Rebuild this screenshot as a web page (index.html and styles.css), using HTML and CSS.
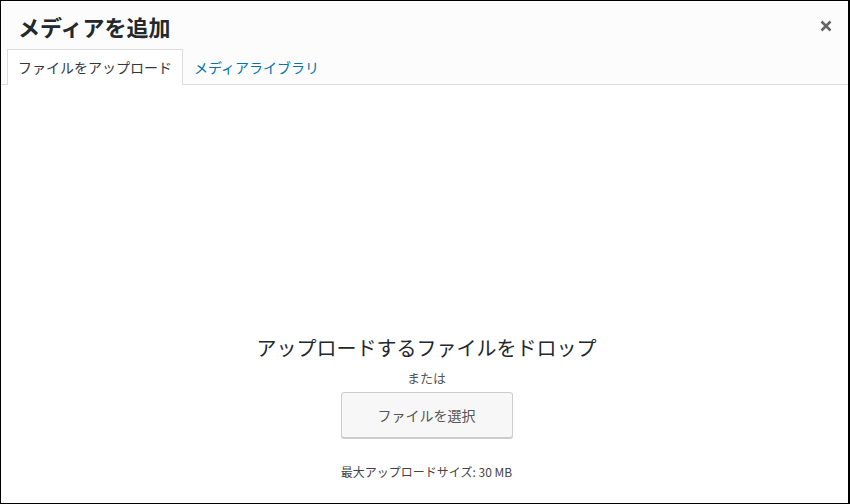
FILE: index.html
```html
<!DOCTYPE html>
<html lang="ja">
<head>
    <title>メディアを追加</title>
    <meta charset="utf-8">
    <link rel="stylesheet" href="styles.css">
</head>
<body>
    <div class="modal">
        <div class="modal-head">
            <div class="title-row">
                <h1>メディアを追加</h1>
                <button type="button" class="close" aria-label="閉じる">
                    <svg width="12" height="12" viewBox="0 0 12 12">
                        <path d="M1.5 1.5 L10.5 10.5 M10.5 1.5 L1.5 10.5" stroke="#666" stroke-width="2.6" fill="none"/>
                    </svg>
                </button>
            </div>
            <nav class="tabs">
                <a class="tab active" href="#">ファイルをアップロード</a>
                <a class="tab" href="#">メディアライブラリ</a>
            </nav>
        </div>
        <div class="uploader">
            <p class="drop-title">アップロードするファイルをドロップ</p>
            <p class="or">または</p>
            <button type="button" class="select-btn">ファイルを選択</button>
            <p class="max-size">最大アップロードサイズ: 30 MB</p>
        </div>
    </div>
</body>
</html>
```

FILE: styles.css
```css
html, body {
    margin: 0;
    padding: 0;
}
body {
    font-family: "Noto Sans CJK JP", "Noto Sans", sans-serif;
    color: #444;
    background: #fff;
}
.modal {
    height: 504px;
    box-sizing: border-box;
    border-style: solid;
    border-color: #000;
    border-width: 1px 2px 1px 1px;
    display: flex;
    flex-direction: column;
}
.modal-head {
    background: #fcfcfc;
    border-bottom: 1px solid #ddd;
    padding: 9px 16px 0 6px;
}
.title-row {
    display: flex;
    justify-content: space-between;
    align-items: center;
    margin-bottom: 7px;
}
h1 {
    margin: 0;
    padding-left: 11px;
    font-size: 22px;
    line-height: 32px;
    font-weight: 700;
    color: #23282d;
}
.close {
    border: 0;
    background: none;
    padding: 0;
    width: 12px;
    height: 12px;
    display: block;
}
.close svg {
    display: block;
}
.tabs {
    display: flex;
    margin-bottom: -1px;
}
.tab {
    display: block;
    padding: 0 10px;
    line-height: 35px;
    font-size: 14px;
    text-decoration: none;
    color: #0073aa;
    border: 1px solid transparent;
    border-bottom: 0;
}
.tab.active {
    color: #32373c;
    background: #fff;
    border-color: #ddd;
}
.uploader {
    flex: 1;
    display: flex;
    flex-direction: column;
    align-items: center;
    padding: 249px 0 0 4px;
}
.uploader p {
    margin: 0;
}
.drop-title {
    font-size: 20px;
    line-height: 28px;
    color: #23282d;
}
.or {
    margin-top: 6px !important;
    font-size: 13px;
    line-height: 20px;
    color: #555;
}
.select-btn {
    margin-top: 4px;
    width: 172px;
    height: 46px;
    font-family: inherit;
    font-size: 14px;
    color: #555;
    background: #f7f7f7;
    border: 1px solid #ccc;
    border-radius: 3px;
    box-shadow: 0 1px 0 #ccc;
}
.max-size {
    margin-top: 25px !important;
    font-size: 12px;
    line-height: 18px;
    color: #444;
}
```
